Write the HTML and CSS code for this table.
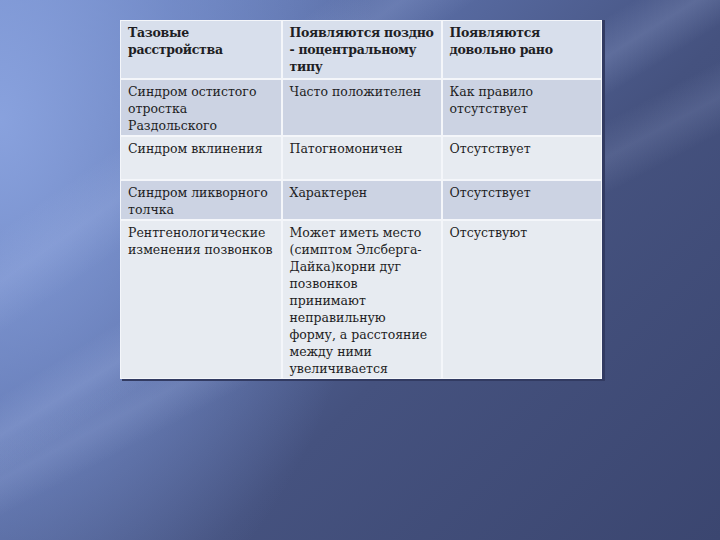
FILE: index.html
```html
<!DOCTYPE html>
<html lang="ru">
<head>
<meta charset="utf-8">
<link rel="stylesheet" href="styles.css">
</head>
<body>
<div class="slide">
  <div class="streaks"></div>
  <div class="table-wrap">
    <table class="grid">
      <colgroup><col class="c1"><col class="c2"><col class="c3"></colgroup>
      <tr class="head">
        <th>Тазовые<br>расстройства</th>
        <th>Появляются поздно<br>- поцентральному<br>типу</th>
        <th>Появляются<br>довольно рано</th>
      </tr>
      <tr class="dark r1">
        <td>Синдром остистого<br>отростка<br>Раздольского</td>
        <td>Часто положителен</td>
        <td>Как правило<br>отсутствует</td>
      </tr>
      <tr class="light r2">
        <td>Синдром вклинения</td>
        <td>Патогномоничен</td>
        <td>Отсутствует</td>
      </tr>
      <tr class="dark r3">
        <td>Синдром ликворного<br>толчка</td>
        <td>Характерен</td>
        <td>Отсутствует</td>
      </tr>
      <tr class="light r4">
        <td>Рентгенологические<br>изменения позвонков</td>
        <td>Может иметь место<br>(симптом Элсберга-<br>Дайка)корни дуг<br>позвонков<br>принимают<br>неправильную<br>форму, а расстояние<br>между ними<br>увеличивается</td>
        <td>Отсуствуют</td>
      </tr>
    </table>
  </div>
</div>
</body>
</html>
```
FILE: styles.css
```css
html, body {
  margin: 0;
  padding: 0;
  width: 720px;
  height: 540px;
  overflow: hidden;
}
.slide {
  position: relative;
  width: 720px;
  height: 540px;
  box-sizing: border-box;
  padding: 20px 0 0 120px;
  background:
    radial-gradient(ellipse 380px 560px at 0px 120px, rgba(140,165,225,0.9), rgba(125,150,212,0.55) 50%, rgba(90,110,170,0) 100%),
    linear-gradient(135deg, #7089c6 0%, #586ba2 35%, #45527f 60%, #3b4670 100%);
}
.streaks {
  position: absolute;
  inset: 0;
  background:
    linear-gradient(148deg, rgba(255,255,255,0) 0%, rgba(255,255,255,0) 40%, rgba(200,215,255,0.16) 44%, rgba(255,255,255,0) 48%, rgba(255,255,255,0) 100%),
    linear-gradient(152deg, rgba(255,255,255,0) 0%, rgba(255,255,255,0) 48%, rgba(200,215,255,0.12) 52%, rgba(255,255,255,0) 56%, rgba(255,255,255,0) 100%),
    linear-gradient(145deg, rgba(255,255,255,0) 0%, rgba(255,255,255,0) 22%, rgba(200,215,255,0.14) 27%, rgba(255,255,255,0) 32%, rgba(255,255,255,0) 100%);
}
.table-wrap {
  position: relative;
  width: 481px;
  box-shadow: 3px 1px 0 1px #323b62;
}
.grid {
  width: 481px;
  border-collapse: collapse;
  table-layout: fixed;
  font-family: "DejaVu Serif", "Liberation Serif", serif;
  font-size: 12.5px;
  line-height: 17px;
  color: #1e1e24;
}
.c1 { width: 161px; }
.c2 { width: 160px; }
.c3 { width: 160px; }
.grid th, .grid td {
  border: 2px solid #f4f6fa;
  padding: 3px 2px 0 7px;
  vertical-align: top;
  text-align: left;
  white-space: nowrap;
  overflow: hidden;
}
.grid tr:first-child th { border-top: 1px solid #f4f6fa; }
.grid tr:last-child td { border-bottom: 1px solid #f4f6fa; }
.grid th:first-child, .grid td:first-child { border-left: 1px solid #f4f6fa; }
.grid th:last-child, .grid td:last-child { border-right: 1px solid #f4f6fa; }
.grid th {
  font-weight: bold;
  font-size: 12.5px;
  letter-spacing: -0.3px;
}
.head { background: #d8dfec; height: 58px; }
.dark { background: #ccd3e3; }
.light { background: #e7ebf1; }
.r1 { height: 57px; }
.r2 { height: 44px; }
.r3 { height: 40px; }
.r4 { height: 159px; }
```
